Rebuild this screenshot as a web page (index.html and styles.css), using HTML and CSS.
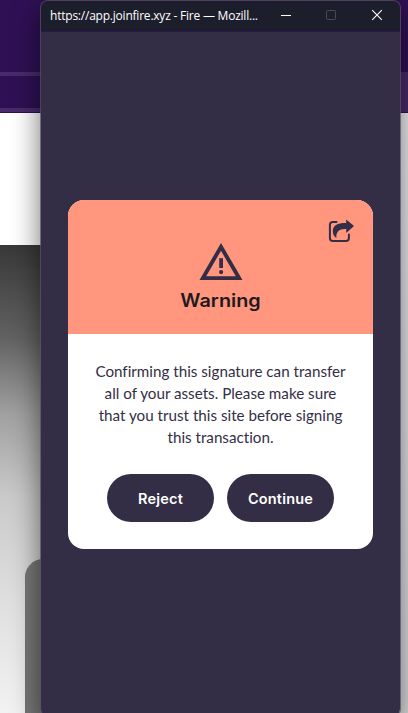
FILE: index.html
```html
<!DOCTYPE html>
<html lang="en">
<head>
  <meta charset="UTF-8">
  <meta name="viewport" content="width=device-width, initial-scale=1.0">
  <title>Fire</title>
  <link rel="stylesheet" href="styles.css">
</head>
<body>
  <div class="desktop">
    <div class="browser-left">
      <div class="tabs"></div>
      <div class="toolbar"></div>
      <div class="page-top"></div>
      <div class="page-hero">
        <div class="hero-card"></div>
      </div>
    </div>
    <div class="browser-right">
      <div class="tabs"></div>
      <div class="toolbar"></div>
      <div class="page-side"></div>
    </div>
  </div>

  <div class="window">
    <header class="titlebar">
      <span class="title">https://app.joinfire.xyz - Fire — Mozill...</span>
      <svg class="control" width="12" height="12" viewBox="0 0 12 12"><path d="M1 6.5h10" stroke="#fff"/></svg>
      <svg class="control" width="12" height="12" viewBox="0 0 12 12"><rect x="1.5" y="1.5" width="9" height="9" rx="0.8" fill="none" stroke="#4b4b58"/></svg>
      <svg class="control" width="12" height="12" viewBox="0 0 12 12"><path d="M1.2 1.2l9.6 9.6M10.8 1.2l-9.6 9.6" stroke="#fff" stroke-width="1.1"/></svg>
    </header>

    <main class="content">
      <section class="card">
        <div class="card-header">
          <svg class="share-icon" width="26" height="24" viewBox="0 0 26 24">
            <path d="M8.5 2.9H4.8Q1.9 2.9 1.9 5.8V19Q1.9 21.9 4.8 21.9H18Q20.9 21.9 20.9 19V15.5" fill="none" stroke="#332e45" stroke-width="2" stroke-linecap="round"/>
            <path d="M18.2 0.4L26 7.1L18.2 14V10.1C11.5 9.7 8.1 12.2 8.3 19.2C5.8 17.2 4.8 14.8 4.8 12C4.8 6.3 9.5 3.8 18.2 3.9Z" fill="#332e45"/>
          </svg>
          <svg class="warning-icon" width="44" height="38" viewBox="0 0 44 38">
            <path d="M22 0L43.5 37H0.5ZM22 7.8L7.2 33.2H36.8Z" fill="#332e45" fill-rule="evenodd"/>
            <path d="M20.2 15.2h3.8v9.8h-3.8z" fill="#332e45"/>
            <circle cx="22.1" cy="29.1" r="2.1" fill="#332e45"/>
          </svg>
          <h1>Warning</h1>
        </div>
        <div class="card-body">
          <p>Confirming this signature can transfer all of your assets. Please make sure that you trust this site before signing this transaction.</p>
          <div class="actions">
            <button>Reject</button>
            <button>Continue</button>
          </div>
        </div>
      </section>
    </main>
  </div>
</body>
</html>
```
FILE: styles.css
```css
:root {
  --ink: #332e45;
  --coral: #ff967d;
  --purple: #2f1055;
}

* {
  box-sizing: border-box;
}

body {
  margin: 0;
  height: 713px;
  overflow: hidden;
  position: relative;
}

.desktop {
  display: flex;
  justify-content: space-between;
  height: 713px;
  background: var(--purple);
}

.browser-left,
.browser-right {
  display: flex;
  flex-direction: column;
}

.browser-left {
  width: 60px;
}

.browser-right {
  width: 20px;
}

.tabs {
  flex: none;
  height: 72px;
  background: var(--purple);
}

.toolbar {
  flex: none;
  height: 41px;
  background: var(--purple);
  border-top: 4px solid #482b6a;
  border-bottom: 1px solid var(--purple);
  box-shadow: inset 0 -4px 0 #482b6a;
}

.browser-right .toolbar {
  background: #482b6a;
}

.page-top {
  flex: none;
  height: 132px;
  background: #fff;
}

.page-hero {
  flex: 1;
  min-height: 0;
  padding: 314px 0 0 25px;
  background: linear-gradient(#383838, #626262 20%, #a0a0a0 36%, #cacaca 54%, #dfdfdf 76%, #f2f2f2);
}

.hero-card {
  height: 160px;
  border: 1px solid #737373;
  border-radius: 18px 0 0 0;
  background: #787878;
}

.page-side {
  flex: 1;
  background: linear-gradient(#f2f2f2, #dedede);
}

.window {
  position: absolute;
  top: 0;
  left: 40px;
  width: 361px;
  height: 717px;
  display: flex;
  flex-direction: column;
  border: 1px solid rgba(92, 80, 106, 0.75);
  border-radius: 8px;
  background: var(--ink);
  background-clip: padding-box;
  box-shadow: 0 10px 28px rgba(0, 0, 0, 0.55);
  overflow: hidden;
}

.titlebar {
  display: flex;
  align-items: center;
  height: 31px;
  padding: 0 17px 2px 9px;
  background: #1d1e2b;
  border-bottom: 1px solid #2c174f;
}

.title {
  flex: 1;
  min-width: 0;
  font: 12px "Open Sans", "Noto Sans", sans-serif;
  letter-spacing: -0.22px;
  color: #fff;
  white-space: nowrap;
}

.control {
  flex: none;
  margin-left: 33px;
}

.control:last-child {
  margin-left: 34px;
}

.content {
  flex: 1;
  padding: 168px 27px 0;
}

.card {
  width: 305px;
  border-radius: 16px;
  background: #fff;
  overflow: hidden;
}

.card-header {
  display: flex;
  flex-direction: column;
  align-items: center;
  height: 134px;
  padding: 19px 19px 0;
  background: var(--coral);
}

.share-icon {
  align-self: flex-end;
}

h1 {
  margin: 8px 0 0;
  font: 600 18px/24px Inter, sans-serif;
  color: #201a20;
  transform: scaleX(1.1);
}

.card-body {
  padding: 26px 24px 27px;
  text-align: center;
}

p {
  margin: 0;
  font: 15.2px/22px Lato, sans-serif;
  font-variant-ligatures: none;
  color: var(--ink);
}

.actions {
  display: flex;
  justify-content: center;
  gap: 13px;
  margin-top: 26px;
}

button {
  width: 107px;
  height: 48px;
  padding: 0;
  border: none;
  border-radius: 24px;
  background: var(--ink);
  color: #fff;
  font: 600 14.5px Inter, sans-serif;
  letter-spacing: 0.2px;
  cursor: pointer;
}
```
